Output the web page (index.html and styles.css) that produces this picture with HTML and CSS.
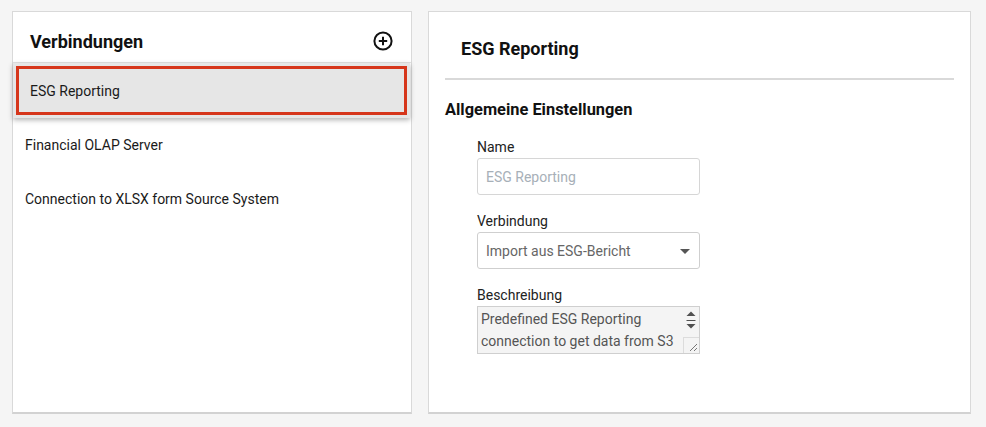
FILE: index.html
```html
<!DOCTYPE html>
<html lang="de">
<head>
<meta charset="utf-8">
<title>Verbindungen</title>
<link rel="stylesheet" href="styles.css">
</head>
<body>
<div class="page">
  <section class="panel list-panel">
    <header class="list-header">
      <h2 class="list-title">Verbindungen</h2>
      <button class="add-btn" aria-label="Hinzufügen">
        <svg width="22" height="22" viewBox="0 0 22 22"><circle cx="11" cy="11" r="8.6" fill="none" stroke="#111" stroke-width="2"/><path d="M11 6.8v8.4M6.8 11h8.4" stroke="#111" stroke-width="2"/></svg>
      </button>
    </header>
    <ul class="conn-list">
      <li class="conn-item selected">ESG Reporting</li>
      <li class="conn-item">Financial OLAP Server</li>
      <li class="conn-item">Connection to XLSX form Source System</li>
    </ul>
  </section>
  <section class="panel detail-panel">
    <h2 class="detail-title">ESG Reporting</h2>
    <div class="divider"></div>
    <h3 class="section-title">Allgemeine Einstellungen</h3>
    <div class="form">
      <div class="field">
        <label class="label">Name</label>
        <div class="input placeholder">ESG Reporting</div>
      </div>
      <div class="field">
        <label class="label">Verbindung</label>
        <div class="input select"><span>Import aus ESG-Bericht</span><span class="caret"></span></div>
      </div>
      <div class="field">
        <label class="label">Beschreibung</label>
        <div class="textarea">
          <div class="ta-text">Predefined ESG Reporting connection to get data from S3</div>
          <div class="ta-bar">
            <svg class="spin" width="10" height="26" viewBox="0 0 10 26"><path d="M0.5 9L5 4.5L9.5 9Z" fill="#505050"/><path d="M0.5 13.5h9" stroke="#505050" stroke-width="1"/><path d="M0.5 17L5 21.5L9.5 17Z" fill="#505050"/></svg>
            <div class="grip"><svg width="15" height="15" viewBox="0 0 15 15"><path d="M13 6L6 13M13 10L10 13" stroke="#777" stroke-width="1"/></svg></div>
          </div>
        </div>
      </div>
    </div>
  </section>
</div>
</body>
</html>
```
FILE: styles.css
```css
* { box-sizing: border-box; }
html, body { margin: 0; padding: 0; }
body {
  background: #f5f5f5;
  font-family: Roboto, "Liberation Sans", Arial, sans-serif;
  color: #1a1a1a;
  width: 986px;
  height: 427px;
  overflow: hidden;
}
.page {
  display: flex;
  gap: 16px;
  padding: 11px 15px 0 12px;
}
.panel {
  background: #fff;
  border: 1px solid #d9d9d9;
  border-bottom: 2px solid #d2d2d2;
  height: 403px;
}
.list-panel { width: 400px; }
.detail-panel { width: 543px; padding: 0 16px; }

.list-header {
  height: 50px;
  display: flex;
  align-items: center;
  justify-content: space-between;
  padding: 8px 17px 0 17px;
}
.list-title {
  margin: 0;
  font-size: 18px;
  font-weight: 700;
  color: #111;
}
.add-btn {
  border: 0;
  background: none;
  padding: 0;
  width: 22px;
  height: 22px;
  margin-top: 0;
  display: block;
}
.add-btn svg { display: block; }

.conn-list {
  list-style: none;
  margin: 0;
  padding: 0;
  border-top: 1px solid #e3e3e3;
}
.conn-item {
  height: 54px;
  display: flex;
  align-items: center;
  padding-left: 12px;
  font-size: 14px;
  color: #1a1a1a;
}
.conn-item.selected {
  height: 55px;
  margin-right: 1px;
  background: #e6e6e6;
  padding-left: 17px;
  padding-top: 0;
  outline: 3px solid #d6361b;
  outline-offset: -6px;
  box-shadow: 0 2px 5px rgba(0,0,0,0.3);
  position: relative;
}

.detail-title {
  margin: 0;
  padding: 26px 0 0 16px;
  height: 66px;
  font-size: 18px;
  font-weight: 700;
  color: #111;
}
.divider {
  height: 2px;
  background: #d9d9d9;
}
.section-title {
  margin: 0;
  padding-top: 20px;
  height: 59px;
  font-size: 16.4px;
  font-weight: 700;
  color: #111;
}
.form {
  padding-left: 32px;
  display: flex;
  flex-direction: column;
  gap: 18px;
}
.field { display: flex; flex-direction: column; }
.label {
  font-size: 14px;
  line-height: 16px;
  color: #222;
  margin-bottom: 3px;
}
.input {
  width: 223px;
  height: 37px;
  border: 1px solid #d6d6d6;
  border-radius: 3px;
  font-size: 14px;
  padding: 0 8px;
  display: flex;
  align-items: center;
  color: #666;
}
.input.placeholder { color: #a7b0b8; }
.select { justify-content: space-between; padding-right: 9px; border-color: #cfcfcf; }
.caret {
  width: 0; height: 0;
  border-left: 5px solid transparent;
  border-right: 5px solid transparent;
  border-top: 5px solid #555;
  margin-top: 1px;
}
.textarea {
  width: 223px;
  height: 48px;
  border: 1px solid #cfcfcf;
  background: #f4f4f4;
  display: flex;
}
.ta-text {
  flex: 1;
  font-size: 14px;
  line-height: 22px;
  color: #555;
  padding: 1px 0 0 3px;
  overflow: hidden;
}
.ta-bar {
  width: 16px;
  display: flex;
  flex-direction: column;
  justify-content: space-between;
  align-items: flex-end;
}
.spin { margin: 0 3px 0 0; display: block; }
.grip {
  width: 16px;
  height: 16px;
  border-top: 1px solid #dcdcdc;
  border-left: 1px solid #dcdcdc;
}
.grip svg { display: block; }
```
